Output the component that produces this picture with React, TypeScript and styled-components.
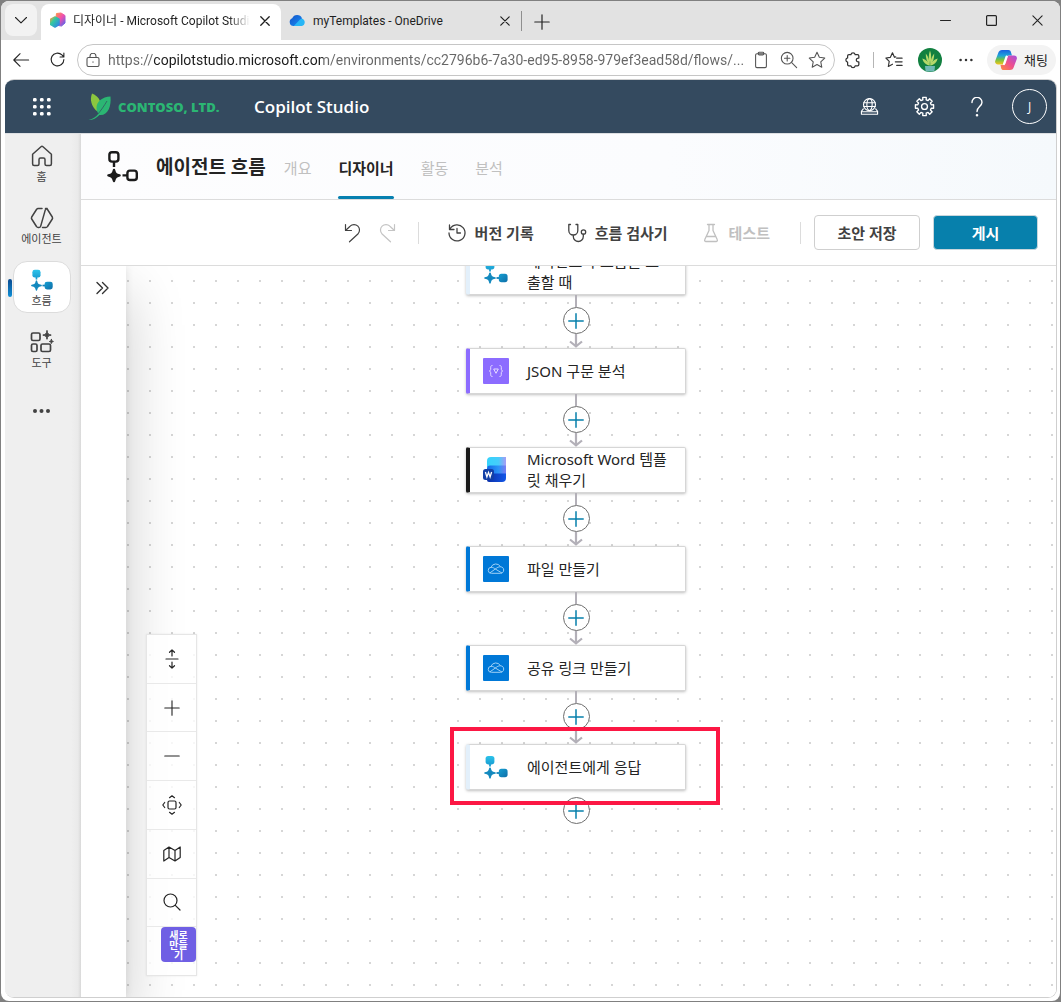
import React from "react";
import styled, { createGlobalStyle, css } from "styled-components";

const latin = `"Open Sans", "Noto Sans CJK KR", sans-serif`;
const chrome = `Roboto, "Noto Sans CJK KR", sans-serif`;
const korean = `"Noto Sans", "Noto Sans CJK KR", sans-serif`;

const GlobalStyle = createGlobalStyle`
  *, *::before, *::after { box-sizing: border-box; }
  body {
    margin: 0;
    background: #808080;
    font-family: ${korean};
    color: #242424;
  }
  button { font: inherit; color: inherit; padding: 0; border: 0; background: none; }
  a { color: inherit; text-decoration: none; }
  svg { flex: none; }
`;

/* ---------- window frame ---------- */

const Window = styled.div`
  height: 100vh;
  padding: 1px;
  display: flex;
  flex-direction: column;
`;

const Frame = styled.div`
  flex: 1;
  min-height: 0;
  display: flex;
  flex-direction: column;
  background: #fff;
  border-radius: 8px;
  overflow: hidden;
`;

const TabStrip = styled.div`
  height: 39px;
  flex: none;
  display: flex;
  align-items: center;
  padding: 3px 0 0 4px;
  background: #e2e2e2;
  font: 12px/16px ${chrome};
`;

const TabSearch = styled.button`
  width: 32px;
  height: 32px;
  margin: 0 4px 4px 0;
  display: grid;
  place-items: center;
  border-radius: 8px;
  background: #f2f2f2;
`;

const BrowserTab = styled.div<{ $active?: boolean }>`
  width: 240px;
  height: 36px;
  display: flex;
  align-items: center;
  gap: 7px;
  padding: 0 8px 3px;
  border-radius: 8px 8px 0 0;
  background: ${(p) => (p.$active ? "#fff" : "transparent")};
  color: #1f1f1f;
`;

const TabTitle = styled.span<{ $fade?: boolean }>`
  flex: 1;
  overflow: hidden;
  white-space: nowrap;
  ${(p) =>
    p.$fade &&
    css`
      mask-image: linear-gradient(90deg, #000 88%, transparent 100%);
    `}
`;

const IconButton = styled.button<{ $w?: number; $h?: number }>`
  width: ${(p) => p.$w ?? 16}px;
  height: ${(p) => p.$h ?? p.$w ?? 16}px;
  flex: none;
  display: grid;
  place-items: center;
  &:disabled { color: #c4c4c4; }
`;

const StripDivider = styled.span`
  width: 1px;
  height: 20px;
  margin: 0 12px 3px 0;
  background: #8f8f8f;
`;

const WindowControls = styled.div`
  margin-left: auto;
  display: flex;
  padding: 0 0 3px;
`;

const AddressRow = styled.div`
  height: 39px;
  flex: none;
  display: flex;
  align-items: center;
  padding: 0 4px 0 2px;
`;

const AddressPill = styled.label`
  flex: 1;
  min-width: 0;
  height: 32px;
  margin-left: 2px;
  display: flex;
  align-items: center;
  padding: 0 3px 0 8px;
  border: 1px solid #c6c6c6;
  border-radius: 16px;
  color: #555;
`;

const AddressInput = styled.input`
  flex: 1;
  min-width: 0;
  height: 24px;
  margin: 0 0 0 8px;
  padding: 0;
  border: 0;
  outline: 0;
  font: 14px/24px ${chrome};
  text-overflow: ellipsis;
  background: linear-gradient(90deg, #666 46px, #1b1b1b 46px, #1b1b1b 215px, #666 215px);
  background-clip: text;
  -webkit-text-fill-color: transparent;
`;

const Extras = styled.div`
  display: flex;
  align-items: center;
  color: #333;
`;

const ExtraDivider = styled.span`
  width: 1px;
  height: 16px;
  margin: 0 2px;
  background: #b5b5b5;
`;

const ChatButton = styled.button`
  height: 30px;
  width: 69px;
  margin-left: 3px;
  display: flex;
  align-items: center;
  justify-content: center;
  gap: 7px;
  border-radius: 15px;
  background: #f3f3f3;
  color: #222;
  font-size: 13px;
  line-height: 20px;
  white-space: nowrap;
`;

/* ---------- web page ---------- */

const Page = styled.div`
  flex: 1;
  min-height: 0;
  margin: 0 3px 3px 4px;
  display: flex;
  flex-direction: column;
  border: 1px solid #cfcfcf;
  border-width: 1px 1px 1px 0;
  border-radius: 9px;
  overflow: hidden;
`;

const SuiteBar = styled.header`
  height: 54px;
  flex: none;
  display: flex;
  align-items: center;
  padding: 0 9px 0 16px;
  border-bottom: 1px solid #dcdfe2;
  background: #344a5f;
  background-clip: padding-box;
  color: #fff;
`;

const Brand = styled.a`
  width: 149px;
  margin-left: 25px;
  display: flex;
  align-items: center;
  gap: 6px;
  color: #2bb673;
  font: 800 13px/20px ${latin};
  white-space: nowrap;
`;

const ProductName = styled.a`
  margin-left: 17px;
  font: 600 17px/24px ${latin};
`;

const SuiteActions = styled.div`
  margin-left: auto;
  display: flex;
  align-items: center;
  gap: 19px;
`;

const Avatar = styled.button`
  width: 35px;
  height: 35px;
  border: 1px solid #fff;
  border-radius: 50%;
  font: 12px/16px ${latin};
`;

const Body = styled.div`
  flex: 1;
  min-height: 0;
  display: flex;
`;

const Rail = styled.nav`
  width: 76px;
  flex: none;
  display: flex;
  flex-direction: column;
  align-items: center;
  gap: 10px;
  padding: 3px 3px 0 0;
  background: linear-gradient(90deg, #efefef 66px, #eaeaea 73px, #d9d9d9 76px);
`;

const RailItem = styled.a<{ $active?: boolean }>`
  position: relative;
  width: 58px;
  height: 52px;
  display: flex;
  flex-direction: column;
  align-items: center;
  justify-content: center;
  gap: 2px;
  padding-top: 2px;
  border: 1px solid ${(p) => (p.$active ? "#dcdcdc" : "transparent")};
  border-radius: 14px;
  background: ${(p) => (p.$active ? "#fff" : "transparent")};
  color: #424242;
  font-size: 11px;
  line-height: 14px;
  white-space: nowrap;
  ${(p) =>
    p.$active &&
    css`
      &::before {
        content: "";
        position: absolute;
        left: -6px;
        top: 17px;
        width: 4px;
        height: 18px;
        border-radius: 2px;
        background: linear-gradient(#0a4a8f, #0f8fd6);
      }
    `}
`;

const Main = styled.main`
  flex: 1;
  min-width: 0;
  display: flex;
  flex-direction: column;
  background: #fff;
`;

const TitleBar = styled.div`
  height: 66px;
  flex: none;
  display: flex;
  align-items: center;
  padding-left: 25px;
  border-bottom: 1px solid #dcdcdc;
  background: linear-gradient(90deg, #fdfdfe, #fbfcfe 60%, #f5f9fc);
`;

const Title = styled.h1`
  margin: 0 18px 0 17px;
  font-size: 19px;
  line-height: 28px;
  font-weight: 700;
  white-space: nowrap;
`;

const Tabs = styled.nav`
  align-self: stretch;
  display: flex;
  gap: 27px;
`;

const Tab = styled.a<{ $active?: boolean }>`
  position: relative;
  display: flex;
  align-items: center;
  padding-top: 2px;
  font-size: 15px;
  line-height: 20px;
  font-weight: ${(p) => (p.$active ? 700 : 400)};
  color: ${(p) => (p.$active ? "#242424" : "#c0c0c0")};
  white-space: nowrap;
  ${(p) =>
    p.$active &&
    css`
      &::after {
        content: "";
        position: absolute;
        left: 0;
        right: 0;
        bottom: 0;
        height: 3px;
        border-radius: 2px;
        background: #0780b0;
      }
    `}
`;

const Toolbar = styled.div`
  height: 66px;
  flex: none;
  display: flex;
  align-items: center;
  justify-content: flex-end;
  padding-right: 18px;
  border-bottom: 1px solid #dcdcdc;
  color: #424242;
`;

const ToolDivider = styled.span`
  width: 1px;
  height: 22px;
  background: #dcdcdc;
`;

const ToolButton = styled.button`
  display: flex;
  align-items: center;
  gap: 8px;
  font-size: 15px;
  line-height: 20px;
  font-weight: 700;
  white-space: nowrap;
  &:disabled { color: #c0c0c0; }
`;

const ToolGroup = styled.div<{ $gap: number; $pad: string }>`
  display: flex;
  align-items: center;
  gap: ${(p) => p.$gap}px;
  padding: ${(p) => p.$pad};
`;

const ActionButton = styled.button<{ $primary?: boolean }>`
  width: ${(p) => (p.$primary ? 105 : 106)}px;
  height: 35px;
  border: 1px solid ${(p) => (p.$primary ? "#c9d6dc" : "#cfcfcf")};
  border-radius: 4px;
  background: ${(p) => (p.$primary ? "#0780ac" : "#fff")};
  color: ${(p) => (p.$primary ? "#fff" : "#424242")};
  font-size: 15px;
  line-height: 20px;
  font-weight: 700;
  white-space: nowrap;
`;

const Workspace = styled.div`
  flex: 1;
  min-height: 0;
  display: flex;
  overflow: hidden;
`;

const SidePanel = styled.aside`
  position: relative;
  z-index: 1;
  width: 45px;
  flex: none;
  padding: 12px 0 0 12px;
  background: #fff;
  color: #333;
  clip-path: inset(0 -140px 0 0);
  box-shadow: 0 0 8px rgba(0, 0, 0, 0.1), 0 26px 58px rgba(0, 0, 0, 0.22);
`;

const Canvas = styled.div`
  position: relative;
  flex: 1;
  min-width: 0;
  overflow: hidden;
  background: #fff radial-gradient(circle, #d6d6d6 1px, transparent 1px) -9px 4px / 22px 22px;
`;

const Flow = styled.div`
  position: absolute;
  top: -17px;
  left: 340px;
  width: 220px;
  display: flex;
  flex-direction: column;
  align-items: center;
`;

const Card = styled.button<{ $accent: string }>`
  width: 220px;
  height: 46px;
  flex: none;
  display: flex;
  align-items: center;
  gap: 18px;
  padding: 0 16px 0 13px;
  border: 1px solid #d6d6d6;
  border-left: 4px solid ${(p) => p.$accent};
  border-radius: 2px;
  background: #fff;
  box-shadow: 0 1px 3px rgba(0, 0, 0, 0.25);
  text-align: left;
  font-size: 15px;
  line-height: 21px;
`;

const CardText = styled.span`
  flex: 1;
  word-break: break-all;
`;

const Link = styled.div`
  height: 53px;
  display: flex;
  flex-direction: column;
  align-items: center;
`;

const Stem = styled.span`
  width: 2px;
  height: 12px;
  background: #b3b0b8;
`;

const AddButton = styled.button`
  width: 27px;
  height: 27px;
  flex: none;
  display: grid;
  place-items: center;
  border: 1px solid #6e6e6e;
  border-radius: 50%;
  background: #fff;
  color: #0780ac;
`;

const LastAdd = styled.div`
  padding-top: 7px;
`;

const Highlight = styled.div`
  position: absolute;
  top: 461px;
  left: 324px;
  width: 270px;
  height: 78px;
  border: 4px solid #fc1744;
  pointer-events: none;
`;

const ViewTools = styled.div`
  position: absolute;
  z-index: 2;
  left: 20px;
  bottom: 21px;
  width: 51px;
  height: 342px;
  display: flex;
  flex-direction: column;
  border: 1px solid #e6e6e6;
  background: rgba(255, 255, 255, 0.8);
  box-shadow: 0 0 2px rgba(0, 0, 0, 0.08);
`;

const ViewTool = styled.button`
  flex: 1;
  display: grid;
  place-items: center;
  border-bottom: 1px solid #e9e9e9;
`;

const NewSlot = styled.div`
  flex: 1;
  display: flex;
  justify-content: flex-end;
  align-items: flex-start;
`;

const NewButton = styled.button`
  width: 35px;
  height: 35px;
  padding: 0 7px;
  border-radius: 4px;
  background: #6f5fe4;
  color: #fff;
  font-size: 10px;
  line-height: 10px;
  font-weight: 700;
  word-break: break-all;
`;

const CanvasShell = styled.div`
  position: relative;
  flex: 1;
  min-width: 0;
  display: flex;
`;

/* ---------- icons ---------- */

type IconProps = { size?: number; w?: number; box?: string; children: React.ReactNode };
const Icon = ({ size = 20, w = 1.3, box = "0 0 20 20", children }: IconProps) => (
  <svg width={size} height={size} viewBox={box} fill="none" stroke="currentColor" strokeWidth={w} strokeLinecap="round" strokeLinejoin="round" aria-hidden="true">
    {children}
  </svg>
);

const CloseIcon = ({ size = 11, w = 1.5 }: { size?: number; w?: number }) => (
  <Icon size={size} w={w} box="0 0 10 10"><path d="M.8.8l8.4 8.4M9.2.8L.8 9.2" /></Icon>
);

const star4 = "M7 14.200c.7 3.300 1.500 4.100 5 4.800-3.500.7-4.300 1.500-5 4.800-.7-3.300-1.500-4.100-5-4.800 3.500-.7 4.300-1.500 5-4.800z";

const FlowMark = ({ size = 24 }: { size?: number }) => (
  <svg width={size} height={size} viewBox="0 0 26 26" aria-hidden="true">
    <defs>
      <linearGradient id="fm" x1="0" y1="0" x2="0" y2="1">
        <stop offset="0" stopColor="#2cc3ea" /><stop offset="1" stopColor="#1a9fd3" />
      </linearGradient>
      <linearGradient id="fs" x1="0" y1="0" x2="1" y2="1">
        <stop offset="0" stopColor="#159fd2" /><stop offset="1" stopColor="#0f6ea8" />
      </linearGradient>
    </defs>
    <path d="M7 9v3.500" stroke="#1a9fd3" strokeWidth="1.8" />
    <path d="M13.500 19h3" stroke="#1180b8" strokeWidth="1.8" />
    <rect x="2.600" y="2" width="8.800" height="8.400" rx="2.600" fill="url(#fm)" />
    <path d={star4} fill="url(#fs)" stroke="#148abf" strokeWidth="1.600" strokeLinejoin="round" />
    <rect x="15.800" y="14.800" width="8.800" height="8.400" rx="2.600" fill="url(#fs)" />
  </svg>
);

const FlowOutline = () => (
  <svg width="33" height="33" viewBox="0 0 33 33" fill="none" stroke="#1b1b1b" strokeWidth="2.4" aria-hidden="true">
    <rect x="3.4" y="2.2" width="9" height="9.4" rx="2.6" />
    <path d="M8 12v5M16.500 25.400h5" />
    <rect x="21.4" y="20.6" width="9.4" height="9.4" rx="2.6" />
    <path d="M8 20c1 3.800 1.800 4.600 5.600 5.400C9.800 26.400 9 27.200 8 31c-1-3.800-1.800-4.600-5.600-5.600C6.200 24.600 7 23.800 8 20z" fill="#1b1b1b" strokeWidth="2.400" strokeLinejoin="round" />
  </svg>
);

const CopilotStudioMark = () => (
  <svg width="17" height="17" viewBox="0 0 17 17" aria-hidden="true">
    <defs>
      <linearGradient id="cs1" x1="0" y1="0" x2="1" y2="1"><stop offset="0" stopColor="#ff9a3c" /><stop offset=".5" stopColor="#f24fae" /><stop offset="1" stopColor="#4668f2" /></linearGradient>
      <linearGradient id="cs2" x1="0" y1="0" x2="1" y2="1"><stop offset="0" stopColor="#f5a33e" /><stop offset=".35" stopColor="#33c9a0" /><stop offset="1" stopColor="#2f7df0" /></linearGradient>
    </defs>
    <path d="M7.500 1.500L12 1l4 2.500v7.500L12.500 14 6 13z" fill="url(#cs1)" stroke="url(#cs1)" strokeWidth="1" strokeLinejoin="round" />
    <path d="M6 5l4 2.200v5.400L6 15l-4.200-2.400V7.200z" fill="url(#cs2)" stroke="url(#cs2)" strokeWidth="1.600" strokeLinejoin="round" />
  </svg>
);

const CloudMark = () => (
  <svg width="17" height="17" viewBox="0 0 17 17" aria-hidden="true">
    <defs><linearGradient id="cl" x1="0" y1="0" x2="1" y2="1"><stop offset="0" stopColor="#1254c8" /><stop offset="1" stopColor="#1a8cf5" /></linearGradient></defs>
    <path d="M4.500 14A4 4 0 013.200 6.300 5.300 5.300 0 0113 6.200l-4 7.800z" fill="url(#cl)" />
    <path d="M4.800 14L11 7.600c1-.9 2.200-1.100 3.300-.4A3.900 3.900 0 0113 14z" fill="#27b6f6" />
  </svg>
);

const PlantAvatar = () => (
  <svg width="24" height="24" viewBox="0 0 24 24" aria-hidden="true">
    <circle cx="12" cy="12" r="12" fill="#128040" />
    <g fill="#b4d96a">
      <path d="M12 2.500c1.600 4 1.600 9 0 15-1.600-6-1.600-11 0-15z" />
      <path d="M7.800 5.500c2.600 3 3.800 7 3.900 12C9 14 7.600 10 7.800 5.500z" />
      <path d="M16.200 5.500c-2.600 3-3.800 7-3.900 12C15 14 16.400 10 16.200 5.500z" />
      <path d="M4.300 10.500c3.700 1 6.200 3.500 7.500 7-4-.5-6.500-3.200-7.500-7zM19.700 10.500c-3.700 1-6.200 3.500-7.500 7 4-.5 6.500-3.200 7.500-7z" />
    </g>
    <path d="M7 18h10l-.5 4.700a12 12 0 01-9 0z" fill="#6fb9b4" />
  </svg>
);

const CopilotMark = () => (
  <svg width="22" height="20" viewBox="0 0 22 20" aria-hidden="true">
    <defs>
      <linearGradient id="cp1" x1="0" y1="0" x2="0" y2="1"><stop offset="0" stopColor="#1b5fe0" /><stop offset=".4" stopColor="#1fa5d8" /><stop offset=".65" stopColor="#6cc04a" /><stop offset="1" stopColor="#f5c518" /></linearGradient>
      <linearGradient id="cp2" x1="1" y1="0" x2="0" y2="1"><stop offset="0" stopColor="#a34fe0" /><stop offset=".5" stopColor="#ee4f8f" /><stop offset="1" stopColor="#ff8a3c" /></linearGradient>
    </defs>
    <path d="M7 0h6.500c1.300 0 2 .8 2.300 1.800L17 5.500h-3c-1.500 0-2.300.8-2.800 2.200L8.800 14.500H3C.8 14.500-.3 12.800.2 11L3.500 2.300C4 1 5.200 0 7 0z" fill="url(#cp1)" />
    <path d="M15 20H8.500c-1.300 0-2-.8-2.300-1.800L5.500 15H8c1.500 0 2.300-.8 2.800-2.200L13.200 5.500H19c2.200 0 3.300 1.700 2.800 3.500L18.500 17.700C18 19 16.800 20 15 20z" fill="url(#cp2)" />
    <path d="M11.500 6.500l-2.600 7.600" stroke="#fff" strokeWidth="2" strokeLinecap="round" />
  </svg>
);

const Leaf = () => (
  <svg width="24" height="28" viewBox="0 0 24 28" aria-hidden="true">
    <path d="M4 .5c6 2.500 9 7 8.500 12L8.500 18C3.500 13 1.500 7 4 .5z" fill="#8cc63f" />
    <path d="M22.500 3.500C14 4 8.500 8.500 8.500 15c0 2.300.7 4 1.800 5.500C8.500 23.500 5 26 .5 27c4 .2 8-1.700 11-5C19.500 23 23.500 14 22.500 3.500z" fill="#2bb673" />
    <path d="M19 8c-3 5-6 9.500-9.500 13.500" stroke="#344a5f" strokeWidth=".7" fill="none" />
  </svg>
);

const WordMark = () => (
  <svg width="26" height="26" viewBox="0 0 26 26" aria-hidden="true">
    <defs>
      <linearGradient id="w1" x1="0" y1="0" x2="1" y2="0"><stop offset="0" stopColor="#35d3fb" /><stop offset=".6" stopColor="#46cdfb" /><stop offset="1" stopColor="#a79cf5" /></linearGradient>
      <linearGradient id="w2" x1="0" y1="0" x2="1" y2="0"><stop offset="0" stopColor="#1465e4" /><stop offset=".6" stopColor="#2a94f7" /><stop offset="1" stopColor="#7b7df2" /></linearGradient>
      <linearGradient id="w3" x1="0" y1="0" x2="1" y2="0"><stop offset="0" stopColor="#0a2fa8" /><stop offset="1" stopColor="#1357e8" /></linearGradient>
    </defs>
    <path d="M8 0h15v10H4V4a4 4 0 014-4z" fill="url(#w1)" />
    <path d="M7 8.500h16V17H4v-5.500a3 3 0 013-3z" fill="url(#w2)" />
    <path d="M4 16.500h19V21a4 4 0 01-4 4H6a2 2 0 01-2-2z" fill="url(#w3)" />
    <rect x="0" y="12" width="11" height="11" rx="2.500" fill="#123fa6" />
    <path d="M2.400 15l1.500 5 1.600-4.600L7.100 20l1.500-5" stroke="#fff" strokeWidth="1.300" fill="none" />
  </svg>
);

const JsonMark = () => (
  <svg width="26" height="26" viewBox="0 0 26 26" fill="none" stroke="#e6dcff" strokeWidth="1" aria-hidden="true">
    <rect width="26" height="26" rx="1" fill="#8c6cff" stroke="none" />
    <path d="M9.500 7.500c-1.500 0-1.800.6-1.800 1.800v1.900c0 1-.4 1.500-1.400 1.800 1 .3 1.400.8 1.400 1.800v1.900c0 1.200.3 1.800 1.800 1.800M16.500 7.500c1.500 0 1.800.6 1.800 1.800v1.900c0 1 .4 1.500 1.400 1.800-1 .3-1.400.8-1.400 1.800v1.900c0 1.200-.3 1.800-1.800 1.800M10.700 11h4.600L13 15.300z" />
  </svg>
);

const DriveMark = () => (
  <svg width="26" height="26" viewBox="0 0 26 26" fill="none" stroke="#9fd0f6" strokeWidth="1" aria-hidden="true">
    <rect width="26" height="26" rx="1" fill="#0078d7" stroke="none" />
    <path d="M8.500 17.300a3 3 0 01-.5-6 5.200 5.200 0 019.500-.5c2 .1 3.200 1.400 3.200 3.200 0 2-1.300 3.300-3.200 3.300zM8 11.300c2 0 3.200.8 4.500 1.800l6.500 4M17.500 10.800c-1.800-.1-3 .6-4.200 1.500L7 16.800" />
  </svg>
);

const PlusIcon = ({ size = 16, w = 1.5 }: { size?: number; w?: number }) => (
  <Icon size={size} w={w} box="0 0 16 16"><path d="M8 .8v14.400M.8 8h14.400" /></Icon>
);

const Arrow = () => (
  <svg width="14" height="14" viewBox="0 0 14 14" fill="none" stroke="#b3b0b8" strokeWidth="2.200" aria-hidden="true">
    <path d="M7 0v12M1 7.500L7 12.300l6-4.800" />
  </svg>
);

/* ---------- data ---------- */

const nodes = [
  { text: "에이전트가 흐름을 호출할 때", accent: "#e3f0fb", icon: <FlowMark size={26} /> },
  { text: "JSON 구문 분석", accent: "#8c6cff", icon: <JsonMark /> },
  { text: "Microsoft Word 템플릿 채우기", accent: "#1b1b1b", icon: <WordMark /> },
  { text: "파일 만들기", accent: "#0078d7", icon: <DriveMark /> },
  { text: "공유 링크 만들기", accent: "#0078d7", icon: <DriveMark /> },
  { text: "에이전트에게 응답", accent: "#e3f0fb", icon: <FlowMark size={26} /> },
];

const railItems = [
  {
    text: "홈",
    icon: <Icon size={24} w={1.5} box="0 0 24 24"><path d="M2.600 10.200L11 2.700a1.500 1.500 0 012 0l8.400 7.500V20a1.500 1.500 0 01-1.500 1.500h-3.400A1.500 1.500 0 0115 20v-4.500a1.500 1.500 0 00-1.500-1.500h-3A1.500 1.500 0 009 15.500V20a1.500 1.500 0 01-1.500 1.500H4.100A1.500 1.500 0 012.600 20z" /></Icon>,
  },
  {
    text: "에이전트",
    icon: <Icon size={24} w={1.500} box="0 0 24 24"><path d="M12 2.500H8.200a2 2 0 00-1.700 1L1.700 11a2 2 0 000 2l4.800 7.500a2 2 0 001.700 1h.6a2 2 0 001.900-1.400l4.600-16.200A2 2 0 0117.200 2.500h-1.700M12.500 21.500h3.300a2 2 0 001.700-1l4.800-7.500a2 2 0 000-2l-4.800-7.500a2 2 0 00-1.700-1" /></Icon>,
  },
  { text: "흐름", active: true, icon: <FlowMark size={24} /> },
  {
    text: "도구",
    icon: (
      <Icon size={24} w={1.700} box="0 0 24 24">
        <rect x="1.500" y="3" width="8.500" height="7.500" rx="1.500" /><rect x="1.500" y="14" width="5.500" height="7.500" rx="1.500" /><rect x="11" y="14" width="9.500" height="7.500" rx="1.500" />
        <path d="M17 .8c.6 3 1.200 3.600 4.200 4.300-3 .7-3.600 1.300-4.200 4.200-.6-2.900-1.200-3.500-4.200-4.200 3-.7 3.600-1.300 4.200-4.300zM21.400 9.500c.3 1.300.7 1.700 2 2-1.300.3-1.700.7-2 2-.3-1.300-.7-1.700-2-2 1.300-.3 1.700-.7 2-2z" fill="currentColor" strokeWidth="1" />
      </Icon>
    ),
  },
];

const viewTools = [
  { label: "간격 조정", icon: <Icon w={1.200}><path d="M4 10h12M10 1v6M7.500 3.300L10 .9l2.500 2.400M10 13v6M7.500 16.700l2.500 2.400 2.500-2.400" /></Icon> },
  { label: "확대", icon: <PlusIcon w={1.100} /> },
  { label: "축소", icon: <Icon size={16} w={1.200} box="0 0 16 16"><path d="M.8 8h14.400" /></Icon> },
  { label: "화면에 맞춤", icon: <Icon w={1.200}><rect x="6" y="6" width="8" height="8" rx="1.500" /><path d="M7.500 2.700L10 .8l2.500 1.900M7.500 17.300l2.500 1.900 2.500-1.900M2.700 7.500L.8 10l1.900 2.500M17.300 7.500l1.900 2.500-1.900 2.500" /></Icon> },
  { label: "미니 맵", icon: <Icon w={1.200}><path d="M1.800 6.500L7 3l6 3.500L18.200 3v10.500L13 17l-6-3.500L1.800 17zM7 3v10.500M13 6.500V17" /></Icon> },
  { label: "검색", icon: <Icon w={1.200}><circle cx="8.500" cy="8.500" r="6.500" /><path d="M13.300 13.300l4.700 4.700" /></Icon> },
];

const gearPath = Array.from({ length: 8 }, (_, i) => {
  const at = (r: number, deg: number) => {
    const a = ((i * 45 + deg) * Math.PI) / 180;
    return `${(10 + r * Math.cos(a)).toFixed(2)} ${(10 + r * Math.sin(a)).toFixed(2)}`;
  };
  return `${i ? "L" : "M"}${at(6.6, -14)}L${at(8.8, -11)}L${at(8.8, 11)}L${at(6.6, 14)}`;
}).join("") + "z";

export default function App() {
  return (
    <Window>
      <GlobalStyle />
      <Frame>
        <TabStrip>
          <TabSearch aria-label="탭 검색"><Icon size={14} w={1.1} box="0 0 14 14"><path d="M1.500 4.500L7 9.800l5.500-5.300" /></Icon></TabSearch>
          <BrowserTab $active>
            <CopilotStudioMark />
            <TabTitle $fade>디자이너 - Microsoft Copilot Studio</TabTitle>
            <IconButton aria-label="탭 닫기"><CloseIcon size={10} w={1.300} /></IconButton>
          </BrowserTab>
          <BrowserTab>
            <CloudMark />
            <TabTitle>myTemplates - OneDrive</TabTitle>
            <IconButton aria-label="탭 닫기"><CloseIcon size={10} w={1.2} /></IconButton>
          </BrowserTab>
          <StripDivider />
          <IconButton aria-label="새 탭" $h={20}><PlusIcon w={1.2} /></IconButton>
          <WindowControls>
            <IconButton $w={46} $h={32} aria-label="최소화"><Icon size={11} w={1} box="0 0 11 11"><path d="M.5 5.500h10" /></Icon></IconButton>
            <IconButton $w={46} $h={32} aria-label="최대화"><Icon size={11} w={1.200} box="0 0 11 11"><rect x=".6" y=".6" width="9.800" height="9.800" rx="1" /></Icon></IconButton>
            <IconButton $w={46} $h={32} aria-label="닫기"><CloseIcon w={1} /></IconButton>
          </WindowControls>
        </TabStrip>

        <AddressRow>
          <IconButton $w={36} aria-label="뒤로"><Icon size={18} w={1.2}><path d="M18.500 10H2M9 3l-7 7 7 7" /></Icon></IconButton>
          <IconButton $w={36} aria-label="새로 고침"><Icon size={17} w={1.3}><path d="M17.500 10a7.500 7.500 0 11-2.300-5.400L17.300 7M17.500 2.500V7H13" /></Icon></IconButton>
          <AddressPill>
            <Icon size={14} w={1.1} box="0 0 14 14"><rect x="1" y="4.500" width="12" height="9" rx="1.500" /><path d="M4 4.500V3.300a3 3 0 016 0v1.200M7 8.700v.6" /></Icon>
            <AddressInput aria-label="주소" readOnly value="https://copilotstudio.microsoft.com/environments/cc2796b6-7a30-ed95-8958-979ef3ead58d/flows/..." />
            <IconButton $w={28} aria-label="클립보드"><Icon size={18} w={1.2}><rect x="4" y="3" width="12" height="15.500" rx="1.500" /><rect x="7" y="1.300" width="6" height="3" rx="1" /></Icon></IconButton>
            <IconButton $w={28} aria-label="확대"><Icon size={18} w={1.2}><circle cx="8" cy="8" r="6.500" /><path d="M13 13l5.500 5.500M8 5v6M5 8h6" /></Icon></IconButton>
            <IconButton $w={28} aria-label="즐겨찾기 추가"><Icon size={18} w={1.2}><path d="M10 1.500l2.600 5.500 6 .8-4.400 4.200 1.100 6-5.300-2.900L4.700 18l1.100-6L1.400 7.800l6-.8z" /></Icon></IconButton>
          </AddressPill>
          <Extras>
            <IconButton $w={36} aria-label="확장"><Icon size={18} w={1.400}><path d="M4 5.500C4 4.500 4.500 4 5.500 4h2.200a2.400 2.400 0 014.700 0H15c1 0 1.500.5 1.500 1.500v2.300h-.6a2.200 2.200 0 000 4.400h.6V15c0 1-.5 1.500-1.500 1.500h-2.600a2.400 2.400 0 01-4.700 0H5.500C4.500 16.500 4 16 4 15v-2.600a2.400 2.400 0 010-4.700z" /></Icon></IconButton>
            <ExtraDivider />
            <IconButton $w={36} aria-label="즐겨찾기"><Icon size={18} w={1.300}><path d="M12 6.500L10.500 7l-2.200-5-2.300 5-5 .8 3.700 3.800-1 5.600 4.600-2.500M13 8h6M11.500 12H19M13 16h6" /></Icon></IconButton>
            <IconButton $w={36} $h={24} aria-label="프로필"><PlantAvatar /></IconButton>
            <IconButton $w={36} aria-label="설정 및 기타"><Icon size={18}><g fill="currentColor" stroke="none"><circle cx="4" cy="10" r="1.400" /><circle cx="10" cy="10" r="1.400" /><circle cx="16" cy="10" r="1.400" /></g></Icon></IconButton>
            <ChatButton><CopilotMark />채팅</ChatButton>
          </Extras>
        </AddressRow>

        <Page>
          <SuiteBar>
            <IconButton $w={42} $h={32} aria-label="앱 시작 관리자">
              <svg width="18" height="18" viewBox="0 0 18 18" fill="#fff" aria-hidden="true">
                {[2, 9, 16].map((y) => [2, 9, 16].map((x) => <rect key={`${x}-${y}`} x={x - 2} y={y - 2} width="3.600" height="3.600" rx="1.300" />))}
              </svg>
            </IconButton>
            <Brand href="#"><Leaf />CONTOSO, LTD.</Brand>
            <ProductName href="#">Copilot Studio</ProductName>
            <SuiteActions>
              <IconButton $w={36} $h={32} aria-label="환경"><Icon size={19} w={1.200}><circle cx="10" cy="8" r="6.300" /><ellipse cx="10" cy="8" rx="2.800" ry="6.300" /><path d="M4 6h12M4 10h12" /><path d="M3.500 12.500L1.500 15v3.200h17V15l-2-2.500M1.500 15.500h17" /></Icon></IconButton>
              <IconButton $w={36} $h={32} aria-label="설정"><Icon size={21} w={1.300}><path d={gearPath} /><circle cx="10" cy="10" r="2.800" /></Icon></IconButton>
              <IconButton $w={32} $h={32} aria-label="도움말"><Icon size={20} w={1.400}><path d="M5 5.500a5 5 0 0110-.3c0 4.300-5 4.500-5 9.300" /><circle cx="10" cy="18.300" r=".6" fill="currentColor" /></Icon></IconButton>
              <Avatar aria-label="계정">J</Avatar>
            </SuiteActions>
          </SuiteBar>

          <Body>
            <Rail>
              {railItems.map((item) => (
                <RailItem key={item.text} href="#" $active={item.active}>{item.icon}{item.text}</RailItem>
              ))}
              <IconButton $w={58} $h={52} aria-label="더 보기"><Icon><g fill="#424242" stroke="none"><circle cx="3" cy="10" r="2" /><circle cx="9.500" cy="10" r="2" /><circle cx="16" cy="10" r="2" /></g></Icon></IconButton>
            </Rail>

            <Main>
              <TitleBar>
                <FlowOutline />
                <Title>에이전트 흐름</Title>
                <Tabs>
                  <Tab href="#">개요</Tab>
                  <Tab href="#" $active>디자이너</Tab>
                  <Tab href="#">활동</Tab>
                  <Tab href="#">분석</Tab>
                </Tabs>
              </TitleBar>

              <Toolbar>
                <ToolGroup $gap={14} $pad="0 21px 0 0">
                  <IconButton $w={20} aria-label="실행 취소"><Icon w={1.200}><path d="M2.500 1.500v6h6M2.800 7.200l4.300-4a5.500 5.500 0 017.800 7.800L6.500 18.800" /></Icon></IconButton>
                  <IconButton $w={20} aria-label="다시 실행" disabled><Icon w={1.200}><path d="M17.500 1.500v6h-6M17.200 7.200l-4.300-4a5.500 5.500 0 00-7.800 7.800l8.400 7.800" /></Icon></IconButton>
                </ToolGroup>
                <ToolDivider />
                <ToolGroup $gap={33} $pad="0 30px 0 28px">
                  <ToolButton><Icon w={1.300}><path d="M3 6a8 8 0 11-1 4M2.500 2v4.500H7M10 5.500V10h3.500" /></Icon>버전 기록</ToolButton>
                  <ToolButton><Icon w={1.300}><path d="M3.500 1.500H1.800v6a4.500 4.500 0 009 0v-6H9M6.300 12v1.500a5 5 0 0010 0v-2.300" /><circle cx="16.500" cy="9" r="2.200" /></Icon>흐름 검사기</ToolButton>
                  <ToolButton disabled><Icon w={1.300}><path d="M6.500 1.500h7M8 1.500v6L3.800 16.500a1.300 1.300 0 001.200 2h10a1.300 1.300 0 001.200-2L12 7.500v-6M5.500 13.500h9" /></Icon>테스트</ToolButton>
                </ToolGroup>
                <ToolDivider />
                <ToolGroup $gap={13} $pad="0 0 0 13px">
                  <ActionButton>초안 저장</ActionButton>
                  <ActionButton $primary>게시</ActionButton>
                </ToolGroup>
              </Toolbar>

              <Workspace>
                <SidePanel>
                  <IconButton $w={20} aria-label="패널 펼치기"><Icon w={1.400}><path d="M4 4.500l5.500 5.500L4 15.500M9.500 4.500l5.500 5.500-5.500 5.500" /></Icon></IconButton>
                </SidePanel>
                <CanvasShell>
                  <Canvas>
                    <Flow>
                      {nodes.map((node, i) => (
                        <React.Fragment key={node.text}>
                          <Card $accent={node.accent}>
                            {node.icon}
                            <CardText>{node.text}</CardText>
                          </Card>
                          {i < nodes.length - 1 ? (
                            <Link>
                              <Stem />
                              <AddButton aria-label="단계 추가"><PlusIcon /></AddButton>
                              <Arrow />
                            </Link>
                          ) : (
                            <LastAdd><AddButton aria-label="단계 추가"><PlusIcon /></AddButton></LastAdd>
                          )}
                        </React.Fragment>
                      ))}
                    </Flow>
                    <Highlight />
                  </Canvas>
                  <ViewTools>
                    {viewTools.map((tool) => (
                      <ViewTool key={tool.label} aria-label={tool.label}>{tool.icon}</ViewTool>
                    ))}
                    <NewSlot><NewButton>새로 만들기</NewButton></NewSlot>
                  </ViewTools>
                </CanvasShell>
              </Workspace>
            </Main>
          </Body>
        </Page>
      </Frame>
    </Window>
  );
}
